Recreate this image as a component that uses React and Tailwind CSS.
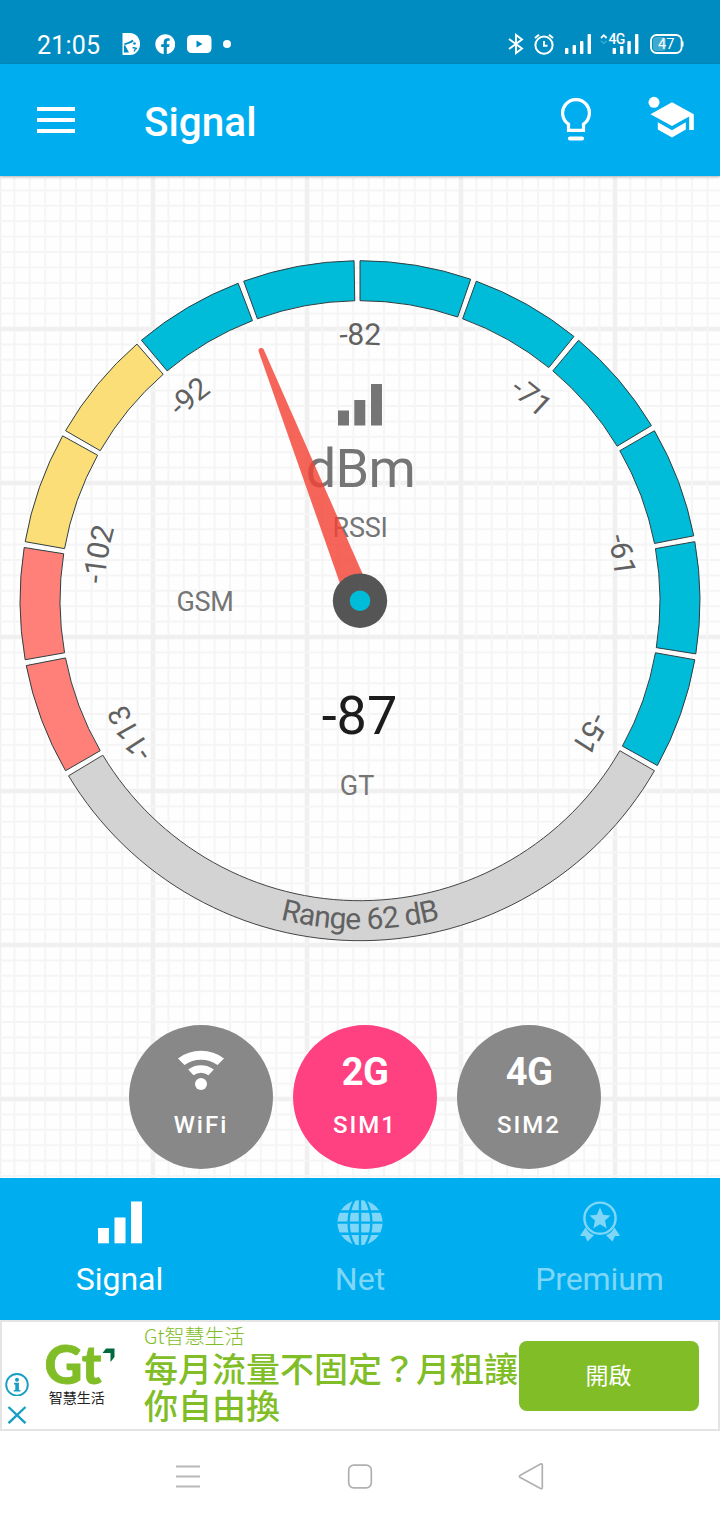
// Signal meter screen: status bar, toolbar, gauge, SIM switcher, bottom tabs and ad banner.

import React, { useState } from "react";
import { FaFacebook } from "react-icons/fa";

const CX = 360;
const CY = 424.7;
const OUTER = 340;
const INNER = 300;

const point = (deg, r) => {
  const a = (deg * Math.PI) / 180;
  return `${(CX + r * Math.sin(a)).toFixed(2)} ${(CY - r * Math.cos(a)).toFixed(2)}`;
};

const ring = (from, to) => {
  const large = to - from > 180 ? 1 : 0;
  return `M${point(from, OUTER)} A${OUTER} ${OUTER} 0 ${large} 1 ${point(to, OUTER)} L${point(to, INNER)} A${INNER} ${INNER} 0 ${large} 0 ${point(from, INNER)} Z`;
};

const segments = [
  { from: -120, color: "#ff8079" },
  { from: -100, color: "#ff8079" },
  { from: -80, color: "#fcde79" },
  { from: -60, color: "#fcde79" },
  { from: -40, color: "#00bcd8" },
  { from: -20, color: "#00bcd8" },
  { from: 0, color: "#00bcd8" },
  { from: 20, color: "#00bcd8" },
  { from: 40, color: "#00bcd8" },
  { from: 60, color: "#00bcd8" },
  { from: 80, color: "#00bcd8" },
  { from: 100, color: "#00bcd8" },
];

const ticks = [
  { deg: -120, label: "-113" },
  { deg: -80, label: "-102" },
  { deg: -40, label: "-92" },
  { deg: 0, label: "-82" },
  { deg: 40, label: "-71" },
  { deg: 80, label: "-61" },
  { deg: 120, label: "-51" },
];

const GridPaper = () => {
  const lines = [];
  for (let i = 0; i < 66; i++) {
    const major = i % 10 === 0;
    const w = major ? 4.6 : 2;
    const color = major ? "#f0f0f0" : "#f5f5f5";
    lines.push(<rect key={`h${i}`} x="0" y={-1 + i * 15.4 - w / 2} width="720" height={w} fill={color} />);
    if (i < 48) {
      lines.push(<rect key={`v${i}`} x={-1 + i * 15.4 - w / 2} y="0" width={w} height="1002" fill={color} />);
    }
  }
  return (
    <svg className="absolute inset-0" width="720" height="1002" viewBox="0 0 720 1002">
      {lines}
    </svg>
  );
};

const Gauge = () => {
  return (
    <svg className="relative block shrink-0" width="720" height="848" viewBox="0 0 720 848">
      <path d={ring(120, 239)} fill="#d3d3d3" stroke="#444" strokeWidth="1" />
      {segments.map((s) => (
        <path key={s.from} d={ring(s.from, s.from + 19)} fill={s.color} stroke="#2f3f42" strokeWidth="1" />
      ))}

      {/* scale labels bend along the inside of the ring */}
      <g fill="#616161" fontSize="30" textAnchor="middle" letterSpacing="-0.7">
        {ticks.map((t) => (
          <g key={t.deg}>
            <path id={`tick${t.deg}`} d={`M${point(t.deg - 20, 256)} A256 256 0 0 1 ${point(t.deg + 20, 256)}`} fill="none" />
            <text>
              <textPath href={`#tick${t.deg}`} startOffset="50%">{t.label}</textPath>
            </text>
          </g>
        ))}
        <path id="range" d={`M${point(220, 328.5)} A328.5 328.5 0 0 0 ${point(140, 328.5)}`} fill="none" />
        <text>
          <textPath href="#range" startOffset="50%">Range 62 dB</textPath>
        </text>
      </g>

      <g fill="#757575">
        <rect x="338" y="234.5" width="11" height="15" />
        <rect x="354.3" y="224" width="11" height="25.5" />
        <rect x="371" y="208" width="11" height="41.5" />
      </g>
      <g fill="#757575" fontSize="27" textAnchor="middle">
        <text x="360.5" y="311" fontSize="54" letterSpacing="-0.6">dBm</text>
        <text x="360" y="361" letterSpacing="-0.3">RSSI</text>
        <text x="205" y="435" letterSpacing="-0.3">GSM</text>
        <text x="357" y="619">GT</text>
      </g>
      <text x="359.5" y="558" fill="#1c1c1c" fontSize="54" textAnchor="middle">-87</text>

      <g transform={`translate(${CX} ${CY}) rotate(-21.55)`}>
        <path d="M-13.2 0 L-2.7 -269.5 A2.8 2.8 0 0 1 2.7 -269.5 L13.2 0 Z" fill="#f44336" fillOpacity="0.82" />
      </g>
      <circle cx={CX} cy={CY} r="27.2" fill="#555" />
      <circle cx={CX} cy={CY} r="10.3" fill="#00bcd8" />
    </svg>
  );
};

const StatusBar = () => {
  return (
    <div className="flex h-16 items-start bg-[#008cc0] pl-[37px] text-white">
      <span className="mt-[31px] w-[84px] text-[25px] leading-[30px] tracking-[0.2px]">21:05</span>
      <svg className="mt-[33px]" width="20" height="22" viewBox="0 0 20 22">
        <path d="M1.5 0H9C15 0 19 5 19 11S15 22 9 22H1.5Z" fill="#fff" />
        <path d="M3.5 11.5C6 9.500 9 10.500 12 7.500" fill="none" stroke="#008cc0" strokeWidth="1.8" />
        <path d="M3.5 12.500V19L7 19Z" fill="#008cc0" stroke="#008cc0" strokeWidth="1.2" />
        <circle cx="13.5" cy="10.500" r="1.3" fill="#008cc0" />
        <path d="M11.500 14.500L16 15.500M13 18.500L15 15" stroke="#008cc0" strokeWidth="1.4" />
      </svg>
      <FaFacebook className="mt-[34px] ml-[13.5px]" size={20.5} />
      <svg className="mt-[35px] ml-[11.5px]" width="25" height="18" viewBox="0 0 25 18">
        <rect width="24.5" height="18" rx="4.5" fill="#fff" />
        <path d="M9.5 5.500L15.500 9L9.5 12.500Z" fill="#008cc0" />
      </svg>
      <span className="mt-10 ml-[11px] h-2 w-2 rounded-full bg-white" />

      <div className="ml-auto flex pr-9">
        <svg className="mt-[33px]" width="18" height="22" viewBox="0 0 18 22" fill="none" stroke="#fff" strokeWidth="1.9">
          <path d="M2 6L15 15.5L9 20V2L15 6.5L2 16" />
        </svg>
        <svg className="mt-[33px] ml-2" width="22" height="22" viewBox="0 0 22 22" fill="none" stroke="#fff" strokeWidth="2">
          <circle cx="11" cy="12.2" r="8.6" />
          <path d="M11 8V12.800H14.5M2 5L6 1.8M20 5L16 1.8" />
        </svg>
        <svg className="mt-[34px] ml-2.5" width="27" height="20" viewBox="0 0 27 20" fill="#fff">
          <rect x="0" y="14" width="3.4" height="6" rx="0.8" />
          <rect x="7.6" y="11" width="3.4" height="9" rx="0.8" />
          <rect x="15" y="7" width="3.4" height="13" rx="0.8" />
          <rect x="22.6" y="0" width="3.4" height="20" rx="0.8" />
        </svg>
        <svg className="mt-[29px] ml-2 overflow-visible" width="39" height="25" viewBox="0 -5 39 25" fill="#fff">
          <path d="M1 4L3.8 1.2L6.6 4" fill="none" stroke="#fff" strokeWidth="1.8" />
          <path d="M1 6.8L3.8 9.5L6.6 6.8" fill="none" stroke="#37a9d2" strokeWidth="1.5" />
          <text x="8.5" y="10" fontSize="14" fontWeight="500" letterSpacing="-0.8">4G</text>
          <rect x="12.6" y="14" width="3.4" height="6" rx="0.8" />
          <rect x="20" y="12" width="3.4" height="8" rx="0.8" />
          <rect x="27.4" y="7" width="3.4" height="13" rx="0.8" />
          <rect x="35" y="0" width="3.4" height="20" rx="0.8" />
        </svg>
        <svg className="mt-[34px] ml-[11px]" width="34" height="20" viewBox="0 0 34 20">
          <rect x="1" y="1" width="30.6" height="18" rx="5.5" fill="none" stroke="#fff" strokeWidth="1.8" />
          <rect x="3" y="3" width="13" height="14" rx="3.5" fill="#3fa9d0" />
          <path d="M32.6 7.5V12.5" stroke="#fff" strokeWidth="1.8" />
          <text x="16.2" y="15.2" fill="#fff" fontSize="14.5" textAnchor="middle">47</text>
        </svg>
      </div>
    </div>
  );
};

const Toolbar = () => {
  return (
    <div className="relative z-10 flex h-28 items-start bg-[#00aef0] pl-[37px] text-white shadow-[0_1px_3px_rgba(0,0,0,0.25)]">
      <button className="mt-[42.5px] flex w-[38px] flex-col gap-[7px]">
        <span className="h-1 w-full bg-white" />
        <span className="h-1 w-full bg-white" />
        <span className="h-1 w-full bg-white" />
      </button>
      <h1 className="mt-[34px] ml-[69px] text-[40.5px] leading-[48px] font-medium">Signal</h1>
      <svg className="mt-[34px] ml-auto" width="30" height="44" viewBox="0 0 30 44" fill="none" stroke="#fff" strokeWidth="3.2">
        <path d="M7.5 33V26.7A13.4 13.4 0 1 1 22.5 26.7V33Z" transform="translate(0 -0.6)" />
        <path d="M9 41.3H21" strokeWidth="4.2" strokeLinecap="round" transform="translate(0 -0.8)" />
      </svg>
      <svg className="mt-8 mr-[25px] ml-[57px]" width="47" height="44" viewBox="0 0 47 44" fill="#fff">
        <circle cx="6" cy="6.3" r="5.5" />
        <path d="M2.5 18.2L24 6.2L45.8 18.2V34H41.2V20.6L24 30Z" />
        <path d="M9.8 26.200L24 34.2L37.800 26.200V33.6L24 41.5L9.8 33.6Z" />
      </svg>
    </div>
  );
};

const WifiIcon = () => (
  <svg className="-mt-1" width="48" height="42" viewBox="0 0 48 42">
    <path d="M1 9.5A38.5 38.5 0 0 1 47 9.5L40.5 16A29 29 0 0 0 7.5 16Z" fill="#fff" />
    <path d="M11.2 20.5A21 21 0 0 1 36.8 20.5L31.5 26.2A12.5 12.5 0 0 0 16.5 26.2Z" fill="#fff" />
    <circle cx="24" cy="35" r="6" fill="#fff" />
  </svg>
);

const networks = [
  { id: "wifi", label: "WiFi" },
  { id: "sim1", label: "SIM1", gen: "2G" },
  { id: "sim2", label: "SIM2", gen: "4G" },
];

const NetworkSwitch = () => {
  const [active, setActive] = useState("sim1");

  return (
    <div className="relative flex gap-5 pt-[0.5px] pl-[129px]">
      {networks.map((n) => (
        <button
          key={n.id}
          onClick={() => setActive(n.id)}
          className={`flex h-36 w-36 flex-col items-center rounded-full text-white ${active === n.id ? "bg-[#ff4081]" : "bg-[#888888]"}`}
        >
          <span className="mt-6 flex h-[46px] items-center justify-center text-[38px] leading-[46px] font-bold tracking-[-0.6px]">
            {n.gen ? n.gen : <WifiIcon />}
          </span>
          <span className="mt-[15px] text-[24px] leading-[30px] font-medium tracking-[2px]">{n.label}</span>
        </button>
      ))}
    </div>
  );
};

const BottomTabs = () => {
  return (
    <div className="grid h-[142px] grid-cols-3 bg-[#00aef0] text-[32px] leading-[38px] text-white">
      <div className="flex flex-col items-center pt-5">
        <svg width="48" height="48" viewBox="0 0 48 48" fill="#fff">
          <rect x="2" y="30" width="11" height="15.3" />
          <rect x="18.5" y="19.5" width="11" height="25.8" />
          <rect x="35" y="3.5" width="11" height="41.8" />
        </svg>
        <span className="mt-3.5 -ml-px">Signal</span>
      </div>
      <div className="flex flex-col items-center pt-5 text-[#7fd6f7]">
        <svg width="48" height="48" viewBox="0 0 48 48">
          <circle cx="24" cy="24.6" r="22.6" fill="#7fd6f7" />
          <g fill="none" stroke="#00aef0" strokeWidth="2.4">
            <path d="M24 1V48M1 24.6H47M1 13.5H47M1 35.7H47" />
            <path d="M19 1C10.5 15 10.5 34 19 48.5M29 1C37.5 15 37.5 34 29 48.5" />
          </g>
        </svg>
        <span className="mt-3.5">Net</span>
      </div>
      <div className="flex flex-col items-center pt-5 text-[#7fd6f7]">
        <svg width="48" height="48" viewBox="0 0 48 48" fill="#7fd6f7">
          <circle cx="24" cy="20.2" r="15.6" fill="none" stroke="#7fd6f7" strokeWidth="2.4" />
          <path d="M24 9.500L27.200 16.800L34.500 17.500L29 22.500L30.7 30.300L24 26.2L17.3 30.300L19 22.500L13.500 17.500L20.800 16.800Z" />
          <path d="M9.5 29.500L4 38L9 38L11.5 43.500L18 37.2C14.5 36 11.5 33.5 9.5 29.500Z" />
          <path d="M38.5 29.500L44 38L39 38L36.5 43.500L30 37.2C33.5 36 36.5 33.5 38.5 29.500Z" />
        </svg>
        <span className="mt-3.5 -ml-px tracking-[-0.1px]">Premium</span>
      </div>
    </div>
  );
};

const AdBanner = () => {
  return (
    <div className="flex h-[111px] items-start border-2 border-[#e4e4e4] bg-white font-['Noto_Sans_CJK_TC',sans-serif] text-[#80bd27]">
      <div className="mt-[50px] ml-[3px] flex w-6 shrink-0 flex-col items-center gap-[9px]">
        <svg width="24" height="24" viewBox="0 0 24 24">
          <circle cx="12" cy="12.8" r="10.8" fill="none" stroke="#169ec4" strokeWidth="1.9" />
          <circle cx="12" cy="7.7" r="2" fill="#169ec4" />
          <path d="M9 10.8H13.9V18H15.4V19.6H8.7V18H10.3V12.4H9Z" fill="#169ec4" />
        </svg>
        <svg width="20" height="19" viewBox="0 0 20 19">
          <path d="M1.5 2L18.500 18.200M18.500 2L1.5 18.200" stroke="#169ec4" strokeWidth="2.4" />
        </svg>
      </div>
      <svg className="mt-[6px] ml-3.5 shrink-0 overflow-visible" width="76" height="84" viewBox="0 -12 76 84">
        <text x="1.5" y="44" fill="#80bd27" stroke="#80bd27" strokeWidth="0.8" fontFamily="Lato" fontWeight="900" fontSize="53" textLength="57" lengthAdjust="spacingAndGlyphs">Gt</text>
        <path d="M63 8.500H71.500V17L67.500 22V13H59.500Z" fill="#00693e" />
        <text x="33.8" y="63.3" fill="#222" fontFamily="Noto Sans CJK TC" fontSize="14" textAnchor="middle">智慧生活</text>
      </svg>
      <div className="ml-[25px] w-[376px] shrink-0">
        <p className="mt-[2px] text-[20px] leading-[24px] font-light">Gt智慧生活</p>
        <p className="mt-[1px] text-[34px] leading-[37px] font-medium whitespace-nowrap">
          每月流量不固定？月租讓
          <br />
          你自由換
        </p>
      </div>
      <button className="mt-[19px] -ml-[1.5px] h-[70px] w-[180px] shrink-0 rounded-[8px] bg-[#80bd27] pb-1 text-[23px] text-white">
        開啟
      </button>
    </div>
  );
};

const AndroidNav = () => {
  return (
    <div className="grid flex-1 grid-cols-[1fr_172px_1fr] bg-white pt-[31px]">
      <svg className="ml-[174px]" width="28" height="28" viewBox="0 0 28 28" stroke="#b8b8b8" strokeWidth="1.8">
        <path d="M2 4.5H26M2 14.5H26M2 24.5H26" />
      </svg>
      <svg className="mx-auto" width="28" height="28" viewBox="0 0 28 28">
        <rect x="2.7" y="3.2" width="22.6" height="22.6" rx="5" fill="none" stroke="#b0b0b0" strokeWidth="1.7" />
      </svg>
      <svg className="ml-[71px]" width="28" height="30" viewBox="0 0 28 30">
        <path d="M3.3 13.2L23.5 2Q25.3 1.3 25.3 3.2V25.5Q25.3 27.3 23.5 26.5L3.3 15.6Q1.5 14.4 3.3 13.2Z" fill="none" stroke="#b0b0b0" strokeWidth="1.7" />
      </svg>
    </div>
  );
};

const App = () => {
  return (
    <div className="flex h-[1520px] w-[720px] flex-col overflow-hidden bg-white font-['Roboto',sans-serif]">
      <StatusBar />
      <Toolbar />
      <div className="relative flex h-[1002px] flex-col bg-[#fefefe]">
        <GridPaper />
        <Gauge />
        <NetworkSwitch />
      </div>
      <BottomTabs />
      <AdBanner />
      <AndroidNav />
    </div>
  );
};

export default App;
